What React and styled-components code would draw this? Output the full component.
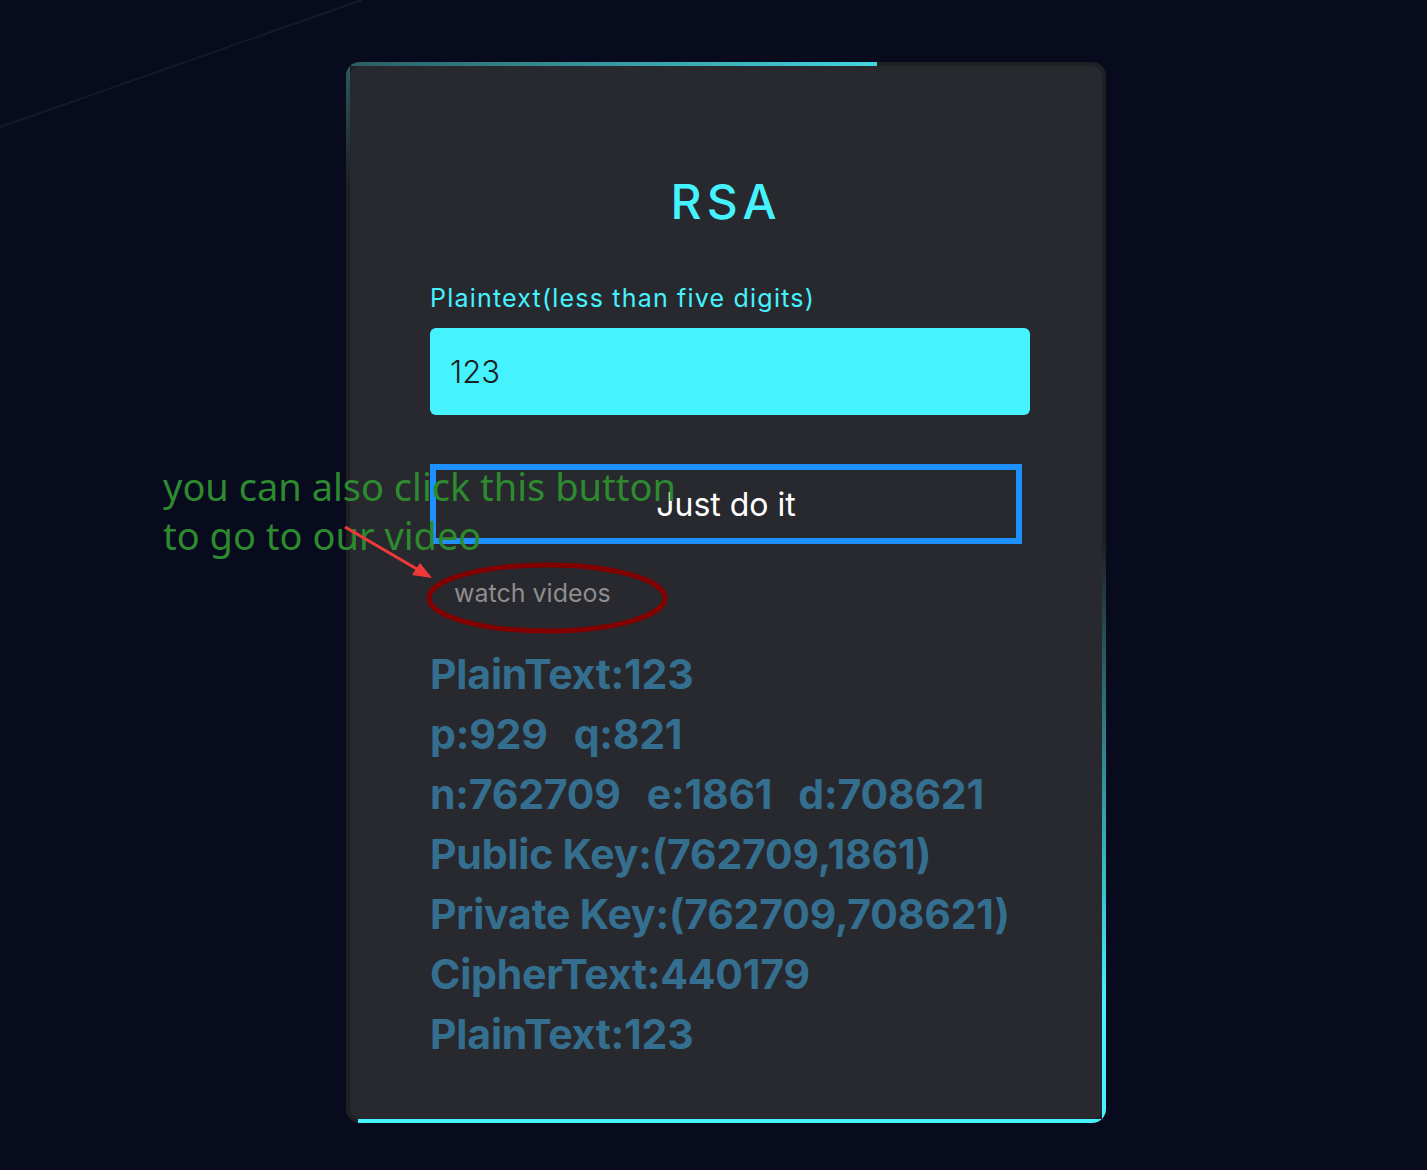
import React from 'react';
import styled, { createGlobalStyle } from 'styled-components';

const GlobalStyle = createGlobalStyle`
  * { box-sizing: border-box; }
  html, body {
    margin: 0;
    padding: 0;
    background: #080b1e;
  }
  body {
    font-family: 'Inter', 'Open Sans', sans-serif;
  }
`;

export const Page = styled.div`
  position: relative;
  min-height: 1170px;
  padding: 62px 0 40px 346px;
  overflow: hidden;
`;

export const BackdropLine = styled.svg`
  position: absolute;
  top: 0;
  left: 0;
  width: 400px;
  height: 140px;
  pointer-events: none;
`;

export const Card = styled.div`
  position: relative;
  width: 760px;
  padding: 4px;
  border-radius: 14px;
  background: #1f2023;
  overflow: hidden;
`;

// the glowing frame segments
export const Glow = styled.span`
  position: absolute;
  ${(p) => p.$side === 'top' && `
    top: 0; left: 0;
    width: 531px; height: 4px;
    background: linear-gradient(90deg, #2b5d62, #42d6df);
  `}
  ${(p) => p.$side === 'left' && `
    top: 0; left: 0;
    width: 4px; height: 120px;
    background: linear-gradient(180deg, #2b5d62, rgba(43, 93, 98, 0));
  `}
  ${(p) => p.$side === 'right' && `
    bottom: 0; right: 0;
    width: 4px; height: 580px;
    background: linear-gradient(180deg, rgba(69, 243, 255, 0) 0%, rgba(69, 243, 255, 0.35) 25%, #45f3ff 80%);
  `}
  ${(p) => p.$side === 'bottom' && `
    bottom: 0; right: 0;
    width: 748px; height: 4px;
    background: #45f3ff;
  `}
`;

export const Panel = styled.div`
  position: relative;
  z-index: 1;
  border-radius: 10px;
  background: #28292e;
  padding: 104px 80px 55px 80px;
  display: flex;
  flex-direction: column;
`;

export const Title = styled.h2`
  margin: 0 0 49px;
  text-align: center;
  color: #45f3ff;
  font-size: 48px;
  line-height: 64px;
  font-weight: 500;
  letter-spacing: 5px;
`;

export const Label = styled.label`
  color: #45f3ff;
  font-size: 25px;
  line-height: 30px;
  letter-spacing: 1.2px;
  margin-bottom: 15px;
`;

export const Input = styled.input`
  width: 600px;
  height: 87px;
  border: none;
  outline: none;
  border-radius: 6px;
  background: #45f3ff;
  padding: 0 20px;
  font-family: inherit;
  font-size: 31px;
  font-weight: 300;
  color: #1d1e22;
  margin-bottom: 49px;
`;

export const Button = styled.button`
  width: 592px;
  height: 80px;
  border: 6px solid #1e90ff;
  background: transparent;
  color: #ffffff;
  font-family: inherit;
  font-size: 32px;
  font-weight: 400;
  padding: 0;
  cursor: pointer;
  margin-bottom: 34px;
`;

export const VideoLink = styled.a`
  align-self: flex-start;
  margin-left: 24px;
  color: #8d8d90;
  font-size: 25px;
  line-height: 30px;
  text-decoration: none;
  margin-bottom: 36px;
`;

export const Results = styled.div`
  display: flex;
  flex-direction: column;
`;

export const ResultRow = styled.div`
  display: flex;
  gap: 26px;
  color: #356f90;
  font-size: 41px;
  font-weight: 700;
  line-height: 60px;
  letter-spacing: -0.2px;
`;

export const Note = styled.div`
  position: absolute;
  left: 163px;
  top: 462px;
  z-index: 3;
  color: #2e8a2f;
  font-family: 'Noto Sans', 'Open Sans', sans-serif;
  font-size: 38px;
  line-height: 49px;
`;

export const Markup = styled.svg`
  position: absolute;
  left: 330px;
  top: 515px;
  z-index: 3;
  overflow: visible;
  pointer-events: none;
`;

const rows = [
  ['PlainText:123'],
  ['p:929', 'q:821'],
  ['n:762709', 'e:1861', 'd:708621'],
  ['Public Key:(762709,1861)'],
  ['Private Key:(762709,708621)'],
  ['CipherText:440179'],
  ['PlainText:123'],
];

export default function App() {
  return (
    <>
      <GlobalStyle />
      <Page>
        <BackdropLine viewBox="0 0 400 140">
          <line x1="0" y1="127" x2="362" y2="0" stroke="#141b22" strokeWidth="2" />
        </BackdropLine>

        <Card>
          <Glow $side="top" />
          <Glow $side="left" />
          <Glow $side="right" />
          <Glow $side="bottom" />
          <Panel>
            <Title>RSA</Title>
            <Label htmlFor="plain">Plaintext(less than five digits)</Label>
            <Input id="plain" defaultValue="123" />
            <Button>Just do it</Button>
            <VideoLink href="#">watch videos</VideoLink>
            <Results>
              {rows.map((r, i) => (
                <ResultRow key={i}>
                  {r.map((t) => (
                    <span key={t}>{t}</span>
                  ))}
                </ResultRow>
              ))}
            </Results>
          </Panel>
        </Card>

        <Note>
          you can also click this button
          <br />
          to go to our video
        </Note>
        <Markup width="340" height="125">
          <ellipse cx="217" cy="83" rx="118" ry="33" fill="none" stroke="#820000" strokeWidth="5" />
          <line x1="15" y1="12" x2="92" y2="57" stroke="#f03a3a" strokeWidth="3" />
          <polygon points="102,63 82,60 90,48" fill="#f03a3a" />
        </Markup>
      </Page>
    </>
  );
}
